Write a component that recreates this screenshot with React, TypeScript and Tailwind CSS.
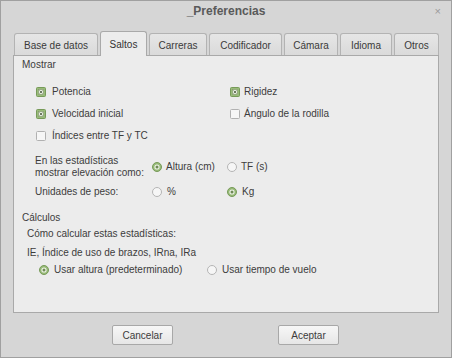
import React from "react";

const tabs = [
  { label: "Base de datos", w: "w-[84px]" },
  { label: "Saltos", w: "w-[47px]", active: true },
  { label: "Carreras", w: "w-[58px]" },
  { label: "Codificador", w: "w-[73px]" },
  { label: "Cámara", w: "w-[54px]" },
  { label: "Idioma", w: "w-[52px]" },
  { label: "Otros", w: "w-[45px]" },
];

const Check = ({ on }: { on?: boolean }) =>
  on ? (
    <svg width="10" height="10" viewBox="0 0 10 10" className="shrink-0">
      <rect x="0.5" y="0.5" width="9" height="9" rx="1" fill="#98bb78" stroke="#779a59" />
      <rect x="2.5" y="2.5" width="5" height="5" fill="#e4ecdc" stroke="#7f9468" strokeWidth="0.6" />
      <path d="M3.6 3.6 L6.4 6.4 M6.4 3.6 L3.6 6.4" stroke="#5d6b52" strokeWidth="0.9" />
    </svg>
  ) : (
    <svg width="10" height="10" viewBox="0 0 10 10" className="shrink-0">
      <rect x="0.5" y="0.5" width="9" height="9" rx="1" fill="#f6f6f6" stroke="#b1b1b1" />
    </svg>
  );

const Radio = ({ on }: { on?: boolean }) =>
  on ? (
    <svg width="10" height="10" viewBox="0 0 10 10" className="shrink-0">
      <circle cx="5" cy="5" r="4.5" fill="#98bb78" stroke="#779a59" />
      <circle cx="5" cy="5" r="2.6" fill="#eef3e8" />
      <circle cx="5" cy="5" r="1.5" fill="#6f8a55" />
    </svg>
  ) : (
    <svg width="10" height="10" viewBox="0 0 10 10" className="shrink-0">
      <circle cx="5" cy="5" r="4.5" fill="#f6f6f6" stroke="#b4b4b4" />
    </svg>
  );

const Opt = ({ on, radio, label, gap = "gap-[6px]" }: { on?: boolean; radio?: boolean; label: string; gap?: string }) => (
  <div className={`flex items-center ${gap}`}>
    {radio ? <Radio on={on} /> : <Check on={on} />}
    <span className="leading-[12px]">{label}</span>
  </div>
);

export default function App() {
  return (
    <div className="w-[452px] h-[358px] bg-[#d6d6d6] border border-[#a0a0a0] flex flex-col font-['Liberation_Sans',Arial,sans-serif] text-[10px] text-[#3c3c3c]">
      {/* title bar */}
      <div className="relative h-[19px] flex items-center justify-center">
        <span className="text-[12px] font-bold text-[#5a5a5a] leading-[14px]">_Preferencias</span>
        <span className="absolute right-[10px] top-[2px] text-[11px] text-[#9a9a9a]">×</span>
      </div>

      {/* tabs */}
      <div className="flex items-end gap-[2px] pl-[13px] mt-[11px] h-[24px] relative z-10">
        {tabs.map((t) =>
          t.active ? (
            <div
              key={t.label}
              className={`${t.w} h-[25px] -mb-[1px] bg-[#ececec] border border-b-0 border-[#a9a9a9] rounded-t-[3px] flex justify-center pt-[5px] text-[#333]`}
            >
              {t.label}
            </div>
          ) : (
            <div
              key={t.label}
              className={`${t.w} h-[22px] bg-gradient-to-b from-[#e6e6e6] to-[#dadada] border border-b-0 border-[#b3b3b3] rounded-t-[3px] flex items-center justify-center pt-[1px] text-[#3a3a3a]`}
            >
              {t.label}
            </div>
          )
        )}
      </div>

      {/* panel */}
      <div className="ml-[12px] w-[426px] h-[258px] bg-[#ececec] border border-[#a9a9a9]">
        <div className="pl-[8px] pt-[3px] leading-[12px]">Mostrar</div>

        <div className="grid grid-cols-[194px_1fr] pl-[22px] mt-[10px]">
          <div className="h-[22px] flex items-center"><Opt on label="Potencia" /></div>
          <div className="h-[22px] flex items-center"><Opt on label="Rigidez" gap="gap-[4px]" /></div>
          <div className="h-[22px] flex items-center"><Opt on label="Velocidad inicial" /></div>
          <div className="h-[22px] flex items-center"><Opt label="Ángulo de la rodilla" gap="gap-[4px]" /></div>
          <div className="h-[22px] flex items-center"><Opt label="Índices entre TF y TC" /></div>
          <div />
        </div>

        <div className="grid grid-cols-[117px_75px_1fr] pl-[21px] mt-[8px] gap-y-[7px]">
          <div className="leading-[12px]">
            En las estadísticas
            <br />
            mostrar elevación como:
          </div>
          <div className="flex items-center"><Opt on radio label="Altura (cm)" gap="gap-[4px]" /></div>
          <div className="flex items-center"><Opt radio label="TF (s)" gap="gap-[4px]" /></div>
          <div className="leading-[12px]">Unidades de peso:</div>
          <div className="flex items-center"><Opt radio label="%" gap="gap-[5px]" /></div>
          <div className="flex items-center"><Opt on radio label="Kg" gap="gap-[5px]" /></div>
        </div>

        <div className="pl-[8px] mt-[14px] leading-[12px]">Cálculos</div>
        <div className="pl-[13px] mt-[4px] leading-[12px]">Cómo calcular estas estadísticas:</div>
        <div className="pl-[13px] mt-[7px] leading-[12px]">IE, Índice de uso de brazos, IRna, IRa</div>
        <div className="flex items-center pl-[25px] mt-[5px] h-[12px]">
          <div className="w-[168px]"><Opt on radio label="Usar altura (predeterminado)" gap="gap-[5px]" /></div>
          <Opt radio label="Usar tiempo de vuelo" gap="gap-[5px]" />
        </div>
      </div>

      {/* buttons */}
      <div className="flex pl-[111px] gap-[105px] mt-[12px]">
        {["Cancelar", "Aceptar"].map((b) => (
          <button
            key={b}
            className="w-[61px] h-[20px] rounded-[2px] border border-[#a8a8a8] bg-gradient-to-b from-[#f7f7f7] to-[#e6e6e6] text-[10px] text-[#3c3c3c] flex items-center justify-center"
          >
            {b}
          </button>
        ))}
      </div>
    </div>
  );
}
